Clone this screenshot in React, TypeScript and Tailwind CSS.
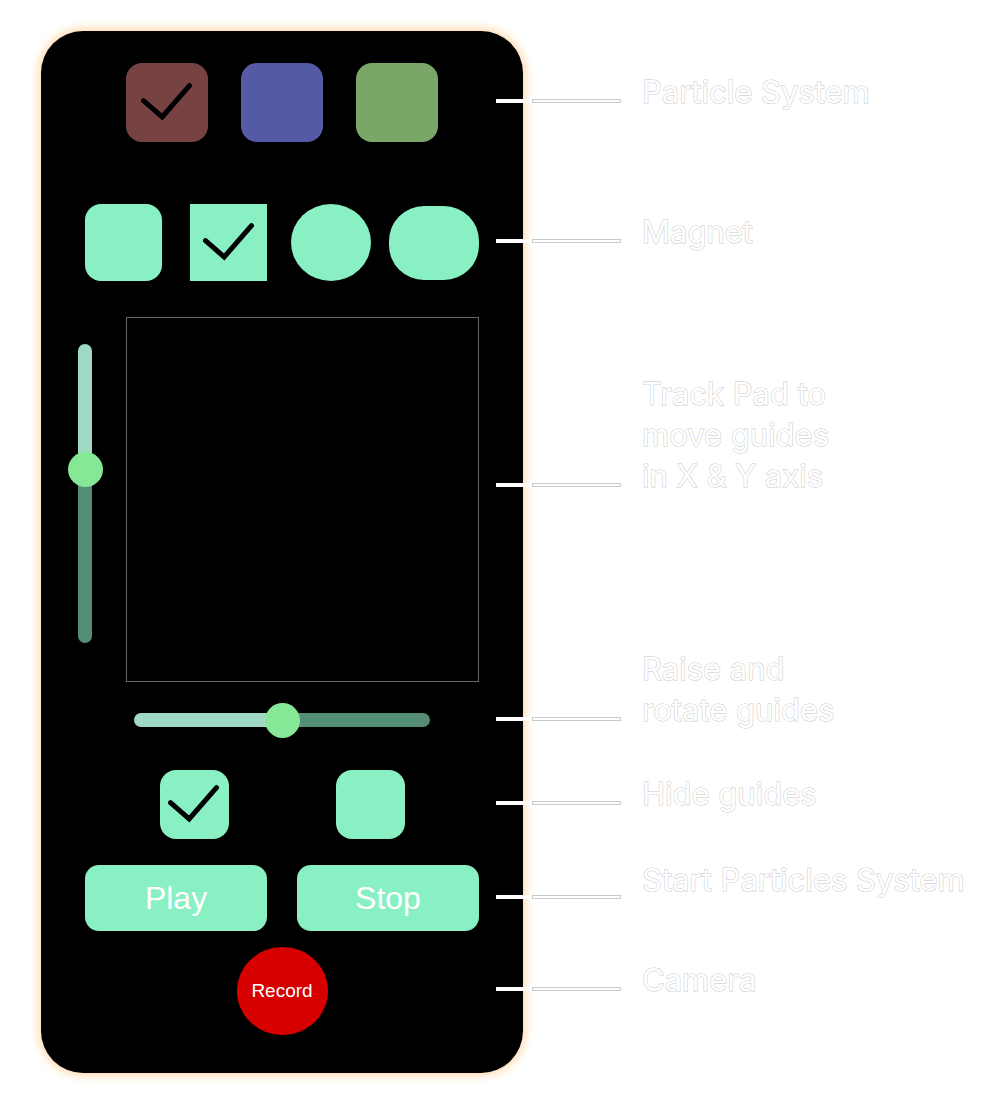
import { useState } from "react";
import type { CSSProperties } from "react";
import clsx from "clsx";

type OptionProps = {
  name: string;
  label: string;
  shape: string;
  checked?: boolean;
};

function Option({ name, label, shape, checked }: OptionProps) {
  return (
    <label className="grid shrink-0 cursor-pointer place-items-center">
      <input
        type="radio"
        name={name}
        aria-label={label}
        defaultChecked={checked}
        className={clsx("peer col-start-1 row-start-1 cursor-pointer appearance-none", shape)}
      />
      <svg
        viewBox="0 0 52 40"
        aria-hidden="true"
        className="pointer-events-none col-start-1 row-start-1 h-10 w-[52px] opacity-0 peer-checked:opacity-100"
      >
        <path d="M2.5 17.7 21.2 34 48.5 2.7" fill="none" stroke="black" strokeWidth="5" strokeLinecap="round" />
      </svg>
    </label>
  );
}

const thumb =
  "[&::-webkit-slider-thumb]:size-[35px] [&::-webkit-slider-thumb]:appearance-none [&::-webkit-slider-thumb]:rounded-full [&::-webkit-slider-thumb]:bg-[#86e797]";

function RaiseSlider() {
  const [value, setValue] = useState(41);
  return (
    <input
      type="range"
      aria-label="Raise guides"
      value={value}
      onChange={(e) => setValue(Number(e.target.value))}
      style={{ "--fill": `${value}%` } as CSSProperties}
      className={clsx(
        "h-[299px] w-[35px] shrink-0 cursor-pointer appearance-none bg-transparent [writing-mode:vertical-lr]",
        "[&::-webkit-slider-runnable-track]:w-[14px] [&::-webkit-slider-runnable-track]:rounded-full [&::-webkit-slider-runnable-track]:bg-[linear-gradient(to_bottom,#a0dac5_var(--fill),#538d76_var(--fill))]",
        "[&::-webkit-slider-thumb]:-ml-[10px]",
        thumb,
      )}
    />
  );
}

function RotateSlider() {
  const [value, setValue] = useState(50);
  return (
    <input
      type="range"
      aria-label="Rotate guides"
      value={value}
      onChange={(e) => setValue(Number(e.target.value))}
      style={{ "--fill": `${value}%` } as CSSProperties}
      className={clsx(
        "mt-5 h-[35px] w-3/4 cursor-pointer self-center appearance-none bg-transparent",
        "[&::-webkit-slider-runnable-track]:h-[14px] [&::-webkit-slider-runnable-track]:rounded-full [&::-webkit-slider-runnable-track]:bg-[linear-gradient(to_right,#a0dac5_var(--fill),#538d76_var(--fill))]",
        "[&::-webkit-slider-thumb]:-mt-[10px]",
        thumb,
      )}
    />
  );
}

function Callout({ lines, className, pointer = "mb-[9px]" }: { lines: string[]; className: string; pointer?: string }) {
  return (
    <li className={clsx("flex items-end", className)}>
      <span className={clsx("flex h-1 shrink-0", pointer)}>
        <span className="w-9 bg-white" />
        <span className="w-[89px] border border-[#cacaca] bg-white" />
      </span>
      <p className="ml-[21px] text-[31px] leading-[41px] whitespace-nowrap text-white [-webkit-text-stroke:1px_#c8c8c8] [paint-order:stroke_fill]">
        {lines.map((line) => (
          <span key={line} className="block">
            {line}
          </span>
        ))}
      </p>
    </li>
  );
}

const mint = "bg-[#89f0c4]";

export default function App() {
  return (
    <main className="grid min-h-screen grid-cols-[481fr_478fr] items-start bg-white pt-[31px] pb-[31px] pl-[41px] font-['Liberation_Sans',sans-serif]">
      <section
        aria-label="Controller"
        className="flex flex-col rounded-[42px] bg-black px-[44px] pt-8 pb-[38px] shadow-[0_0_8px_3px_#ffdcb4]"
      >
        <div role="radiogroup" aria-label="Particle System" className="flex justify-center gap-[33px]">
          <Option name="particle" label="Red" checked shape="h-[79px] w-[82px] rounded-2xl bg-[#774242]" />
          <Option name="particle" label="Blue" shape="h-[79px] w-[82px] rounded-2xl bg-[#545aa5]" />
          <Option name="particle" label="Green" shape="h-[79px] w-[82px] rounded-2xl bg-[#7aa767]" />
        </div>

        <div role="radiogroup" aria-label="Magnet" className="mt-[62px] flex items-center justify-center">
          <Option name="magnet" label="Rounded" shape={clsx("mr-7 size-[77px] rounded-2xl", mint)} />
          <div className="mr-6">
            <Option name="magnet" label="Square" checked shape={clsx("size-[77px]", mint)} />
          </div>
          <Option name="magnet" label="Circle" shape={clsx("mr-[18px] h-[77px] w-20 rounded-[50%]", mint)} />
          <Option name="magnet" label="Capsule" shape={clsx("h-[74px] w-[90px] rounded-[35px]", mint)} />
        </div>

        <div className="mt-9 -ml-[18px] flex gap-6">
          <div className="mt-[27px]">
            <RaiseSlider />
          </div>
          <div role="application" aria-label="Track Pad" className="h-[365px] flex-1 border border-[#666666]" />
        </div>

        <RotateSlider />

        <div role="radiogroup" aria-label="Guides" className="mt-[33px] flex justify-center gap-[107px]">
          <Option name="guides" label="Hide guides" checked shape={clsx("size-[69px] rounded-2xl", mint)} />
          <Option name="guides" label="Show guides" shape={clsx("size-[69px] rounded-2xl", mint)} />
        </div>

        <div className="mt-[26px] grid grid-cols-2 gap-[30px]">
          <button type="button" className={clsx("h-[66px] rounded-[14px] text-[32px] text-white", mint)}>
            Play
          </button>
          <button type="button" className={clsx("h-[66px] rounded-[14px] text-[32px] text-white", mint)}>
            Stop
          </button>
        </div>

        <button
          type="button"
          className="mt-4 h-[88px] w-[91px] self-center rounded-[50%] bg-[#d60000] text-[19px] text-white"
        >
          Record
        </button>
      </section>

      <ul className="relative -ml-[27px] font-[Inter,sans-serif]">
        <Callout className="mt-10" lines={["Particle System"]} />
        <Callout className="mt-[99px]" lines={["Magnet"]} />
        <Callout className="mt-[121px]" lines={["Track Pad to", "move guides", "in X & Y axis"]} />
        <Callout className="mt-[152px]" lines={["Raise and", "rotate guides"]} />
        <Callout className="mt-[43px]" lines={["Hide guides"]} />
        <Callout className="mt-[45px]" lines={["Start Particles System"]} pointer="mb-px" />
        <Callout className="mt-[59px]" lines={["Camera"]} />
      </ul>
    </main>
  );
}
